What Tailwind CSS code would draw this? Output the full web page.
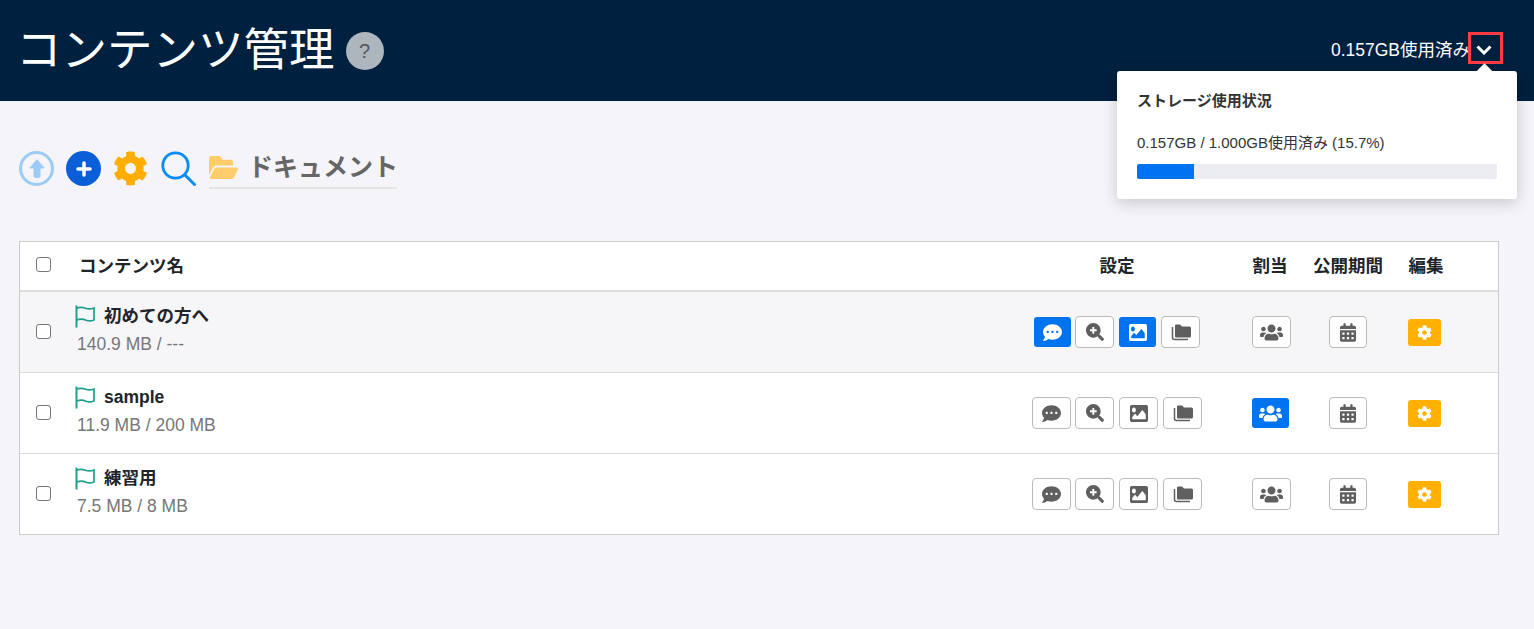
<!DOCTYPE html>
<html lang="ja">
<head>
  <meta charset="UTF-8">
  <title>コンテンツ管理</title>
  <script src="https://cdn.jsdelivr.net/npm/@tailwindcss/browser@4"></script>
</head>
<body class="bg-[#f4f4f9] text-[#212529] font-['Liberation_Sans','Noto_Sans_CJK_JP',sans-serif] h-[629px] overflow-hidden">
  <svg class="hidden">
    <defs>
      <symbol id="cog" viewBox="0 0 512 512"><path fill="currentColor" d="M487.4 315.7l-42.6-24.6c4.3-23.2 4.3-47 0-70.2l42.6-24.6c4.9-2.8 7.1-8.6 5.5-14-11.1-35.6-30-67.8-54.7-94.6-3.8-4.1-10-5.1-14.8-2.3L380.8 110c-17.9-15.4-38.5-27.3-60.8-35.1V25.8c0-5.6-3.9-10.5-9.4-11.7-36.7-8.2-74.3-7.8-109.2 0-5.5 1.2-9.4 6.1-9.4 11.7V75c-22.2 7.9-42.8 19.8-60.8 35.1L88.7 85.5c-4.9-2.8-11-1.9-14.8 2.3-24.7 26.7-43.6 58.9-54.7 94.6-1.7 5.4.6 11.2 5.5 14L67.3 221c-4.3 23.2-4.3 47 0 70.2l-42.6 24.6c-4.9 2.8-7.1 8.6-5.5 14 11.1 35.6 30 67.8 54.7 94.6 3.8 4.1 10 5.1 14.8 2.3l42.6-24.6c17.9 15.4 38.5 27.3 60.8 35.1v49.2c0 5.6 3.9 10.5 9.4 11.7 36.7 8.2 74.3 7.8 109.2 0 5.5-1.2 9.4-6.1 9.4-11.7v-49.2c22.2-7.9 42.8-19.8 60.8-35.1l42.6 24.6c4.9 2.8 11 1.9 14.8-2.3 24.7-26.7 43.6-58.9 54.7-94.6 1.5-5.5-.7-11.3-5.6-14.1zM256 336c-44.1 0-80-35.9-80-80s35.9-80 80-80 80 35.9 80 80-35.9 80-80 80z"/></symbol>
      <symbol id="chat" viewBox="0 0 512 512"><path fill="currentColor" d="M256 32C114.6 32 0 125.1 0 240c0 49.6 21.4 95 57 130.7C44.5 421.1 2.7 466 2.2 466.5c-2.2 2.3-2.8 5.7-1.5 8.7S4.8 480 8 480c66.3 0 116-31.8 140.6-51.4 32.7 12.3 69 19.4 107.4 19.4 141.4 0 256-93.1 256-208S397.4 32 256 32zM128 272c-17.7 0-32-14.3-32-32s14.3-32 32-32 32 14.3 32 32-14.3 32-32 32zm128 0c-17.7 0-32-14.3-32-32s14.3-32 32-32 32 14.3 32 32-14.3 32-32 32zm128 0c-17.7 0-32-14.3-32-32s14.3-32 32-32 32 14.3 32 32-14.3 32-32 32z"/></symbol>
      <symbol id="zoom" viewBox="0 0 512 512"><path fill="currentColor" fill-rule="evenodd" d="M304 192v32c0 6.6-5.4 12-12 12h-56v56c0 6.6-5.4 12-12 12h-32c-6.6 0-12-5.4-12-12v-56h-56c-6.6 0-12-5.4-12-12v-32c0-6.6 5.4-12 12-12h56v-56c0-6.6 5.4-12 12-12h32c6.6 0 12 5.4 12 12v56h56c6.6 0 12 5.4 12 12zm201 284.7L476.7 505c-9.4 9.4-24.6 9.4-33.9 0L343 405.3c-4.5-4.5-7-10.6-7-17V372c-35.3 27.6-79.7 44-128 44C93.1 416 0 322.9 0 208S93.1 0 208 0s208 93.1 208 208c0 48.3-16.4 92.7-44 128h16.3c6.4 0 12.5 2.5 17 7l99.7 99.7c9.3 9.4 9.3 24.6 0 34z"/></symbol>
      <symbol id="image" viewBox="0 64 512 384" preserveAspectRatio="none"><path fill="currentColor" d="M464 448H48c-26.51 0-48-21.49-48-48V112c0-26.51 21.49-48 48-48h416c26.51 0 48 21.49 48 48v288c0 26.51-21.49 48-48 48zM112 120c-30.928 0-56 25.072-56 56s25.072 56 56 56 56-25.072 56-56-25.072-56-56-56zM64 384h384V272l-87.515-87.515c-4.686-4.686-12.284-4.686-16.971 0L208 320l-55.515-55.515c-4.686-4.686-12.284-4.686-16.971 0L64 336v48z"/></symbol>
      <symbol id="folders" viewBox="0 0 20 17"><path fill="currentColor" d="M4 1.5a1 1 0 0 1 1-1h4l2 2h7.5a1.5 1.5 0 0 1 1.5 1.5v8a1.5 1.5 0 0 1-1.5 1.5H5a1 1 0 0 1-1-1z"/><path fill="none" stroke="currentColor" stroke-width="1.5" d="M1.5 3v10.5a2 2 0 0 0 2 2H17"/></symbol>
      <symbol id="users" viewBox="0 0 640 512"><path fill="currentColor" d="M96 224c35.3 0 64-28.7 64-64s-28.7-64-64-64-64 28.7-64 64 28.7 64 64 64zm448 0c35.3 0 64-28.7 64-64s-28.7-64-64-64-64 28.7-64 64 28.7 64 64 64zm32 32h-64c-17.6 0-33.5 7.1-45.1 18.6 40.3 22.1 68.9 62 75.1 109.4h66c17.7 0 32-14.3 32-32v-32c0-35.3-28.7-64-64-64zm-256 0c61.9 0 112-50.1 112-112S381.9 32 320 32 208 82.1 208 144s50.1 112 112 112zm76.8 32h-8.3c-20.8 10-43.9 16-68.5 16s-47.6-6-68.5-16h-8.3C179.6 288 128 339.6 128 403.2V432c0 26.5 21.5 48 48 48h288c26.5 0 48-21.5 48-48v-28.8c0-63.6-51.6-115.2-115.2-115.2zm-223.7-13.4C161.5 263.1 145.6 256 128 256H64c-35.3 0-64 28.7-64 64v32c0 17.7 14.3 32 32 32h65.9c6.3-47.4 34.9-87.3 75.2-109.4z"/></symbol>
      <symbol id="calendar" viewBox="0 0 448 512"><path fill="currentColor" d="M0 464c0 26.5 21.5 48 48 48h352c26.5 0 48-21.5 48-48V192H0v272zm320-196c0-6.6 5.4-12 12-12h40c6.6 0 12 5.4 12 12v40c0 6.6-5.4 12-12 12h-40c-6.6 0-12-5.4-12-12v-40zm0 128c0-6.6 5.4-12 12-12h40c6.6 0 12 5.4 12 12v40c0 6.6-5.4 12-12 12h-40c-6.6 0-12-5.4-12-12v-40zM192 268c0-6.6 5.4-12 12-12h40c6.6 0 12 5.4 12 12v40c0 6.6-5.4 12-12 12h-40c-6.6 0-12-5.4-12-12v-40zm0 128c0-6.6 5.4-12 12-12h40c6.6 0 12 5.4 12 12v40c0 6.6-5.4 12-12 12h-40c-6.6 0-12-5.4-12-12v-40zM64 268c0-6.6 5.4-12 12-12h40c6.6 0 12 5.4 12 12v40c0 6.6-5.4 12-12 12H76c-6.6 0-12-5.4-12-12v-40zm0 128c0-6.6 5.4-12 12-12h40c6.6 0 12 5.4 12 12v40c0 6.6-5.4 12-12 12H76c-6.6 0-12-5.4-12-12v-40zM400 64h-48V16c0-8.8-7.2-16-16-16h-32c-8.8 0-16 7.2-16 16v48H160V16c0-8.8-7.2-16-16-16h-32c-8.8 0-16 7.2-16 16v48H48C21.5 64 0 85.5 0 112v48h448v-48c0-26.5-21.5-48-48-48z"/></symbol>
      <symbol id="flag" viewBox="0 0 21 23"><path fill="none" stroke="currentColor" stroke-width="2" d="M1.5 .5v22"/><path fill="none" stroke="currentColor" stroke-width="1.7" d="M1.5 3C5 2 8 2.2 10.5 3.2S16 4.2 19 3V15c-3 1.2-6 1.2-8.5 0S5 13.8 1.5 15"/></symbol>
    </defs>
  </svg>

  <header class="relative h-[101px] bg-[#00203f] flex items-center justify-between pl-[16px] pr-[31px]">
    <div class="flex items-center gap-[11px]">
      <h1 class="text-[45.5px] leading-none font-normal text-white whitespace-nowrap">コンテンツ管理</h1>
      <span class="w-[38px] h-[38px] rounded-full bg-[#adb5bd] text-[#555] text-[20px] flex items-center justify-center">?</span>
    </div>
    <div class="flex items-start self-start mt-[32px]">
      <span class="text-white text-[17.5px] leading-[36px] whitespace-nowrap -mr-[2px]">0.157GB使用済み</span>
      <button class="w-[35px] h-[32px] border-[3px] border-[#ff3b45] text-white flex items-center justify-center">
        <svg class="w-[16px] h-[10px] mt-[3px] mr-[3px]" viewBox="0 0 16 10"><path fill="none" stroke="currentColor" stroke-width="3" d="M1.5 1.5L8 8l6.5-6.5"/></svg>
      </button>
    </div>

    <div class="absolute left-[1117px] top-[71px] w-[400px] h-[128px] bg-white rounded-[3px] shadow-[0_4px_16px_rgba(0,0,0,0.18)] px-[20px] pt-[21px] text-[#333] z-10">
      <span class="absolute -top-[5px] left-[361px] w-[13px] h-[13px] rotate-45 bg-white"></span>
      <h2 class="text-[15px] leading-[18px] font-bold">ストレージ使用状況</h2>
      <p class="mt-[23px] text-[15px] leading-[20px]">0.157GB / 1.000GB使用済み (15.7%)</p>
      <div class="mt-[11px] h-[15px] bg-[#ecedf2] rounded-[2px] overflow-hidden">
        <div class="h-full bg-[#0073f0]" style="width:15.7%"></div>
      </div>
    </div>
  </header>

  <main class="px-[19px]">
    <div class="flex items-start h-[36px] mt-[50px]">
      <span class="w-[35px] h-[35px] rounded-full border-[3px] border-[#9ccbf8] bg-[#f4f4f9] flex items-center justify-center">
        <svg class="w-[16px] h-[19px]" viewBox="0 0 16 19"><path fill="#9ccbf8" stroke="#9ccbf8" stroke-linejoin="round" d="M8 .8L15.2 9H11V17a1.5 1.5 0 0 1-1.5 1.5h-3A1.5 1.5 0 0 1 5 17V9H.8z"/></svg>
      </span>
      <span class="ml-[12px] w-[35px] h-[35px] rounded-full bg-[#0a5fd8] flex items-center justify-center">
        <svg class="w-[16px] h-[16px]" viewBox="0 0 16 16"><path fill="none" stroke="#fff" stroke-width="3.5" stroke-linecap="round" d="M8 2v12M2 8h12"/></svg>
      </span>
      <svg class="ml-[12px] w-[35px] h-[35px] text-[#ffae00]"><use href="#cog"/></svg>
      <svg class="ml-[13px] w-[35px] h-[35px] text-[#0a8cf5]" viewBox="0 0 35 35"><circle cx="14.5" cy="14.5" r="12.7" fill="none" stroke="currentColor" stroke-width="2.8"/><path d="M24 24l9.5 9.5" fill="none" stroke="currentColor" stroke-width="3" stroke-linecap="round"/></svg>
      <div class="ml-[13px] flex items-center h-[38px] pb-[3px] border-b-2 border-[#e4e4e7] w-[188px]">
        <svg class="w-[29px] h-[23px] shrink-0" viewBox="0 64 576 384" preserveAspectRatio="none"><path fill="#ffce6b" d="M572.694 292.093L500.27 416.248A63.997 63.997 0 0 1 444.989 448H45.025c-18.523 0-30.064-20.093-20.731-36.093l72.424-124.155A64 64 0 0 1 152 256h399.964c18.523 0 30.064 20.093 20.73 36.093zM152 224h328v-48c0-26.51-21.49-48-48-48H272l-64-64H48C21.49 64 0 85.49 0 112v278.046l69.077-118.418C86.214 242.25 117.989 224 152 224z"/></svg>
        <span class="ml-[10px] text-[25px] leading-none font-bold text-[#666] whitespace-nowrap">ドキュメント</span>
      </div>
    </div>

    <div class="mt-[54px] w-[1480px] border border-[#ccc] bg-white">
      <div class="grid grid-cols-[47px_933px_234px_72px_84px_72px_36px] h-[50px] items-center border-b-2 border-[#dcdcdc] text-[17.5px] font-bold text-[#212529]">
        <input type="checkbox" class="justify-self-center w-[15px] h-[15px] appearance-none rounded-[3px] border border-[#767676] bg-white -mt-[4px]">
        <span class="pl-[12px]">コンテンツ名</span>
        <span class="text-center">設定</span>
        <span class="text-center">割当</span>
        <span class="text-center">公開期間</span>
        <span class="text-center">編集</span>
      </div>

      <div class="grid grid-cols-[47px_933px_234px_72px_84px_72px_36px] h-[81px] items-center border-b border-[#dcdcdc] bg-[#f6f6f9]">
        <input type="checkbox" class="justify-self-center w-[15px] h-[15px] -mt-[2px] appearance-none rounded-[3px] border border-[#767676] bg-white">
        <div class="pl-[8px] pb-[5px]">
          <div class="flex items-center gap-[8px] h-[24px]">
            <svg class="w-[21px] h-[23px] text-[#1fa08a]"><use href="#flag"/></svg>
            <span class="text-[17.5px] font-bold">初めての方へ</span>
          </div>
          <p class="mt-[4px] pl-[2px] text-[17.5px] leading-[22px] text-[#777]">140.9 MB / ---</p>
        </div>
        <div class="flex justify-center gap-[4px]">
          <button class="w-[37px] h-[30px] rounded-[3px] bg-[#0073f0] text-white flex items-center justify-center"><svg class="w-[19px] h-[19px]"><use href="#chat"/></svg></button>
          <button class="w-[39px] h-[32px] -my-px mr-px rounded-[4px] border border-[#bbb] bg-white text-[#5f5f5f] flex items-center justify-center"><svg class="w-[18px] h-[18px]"><use href="#zoom"/></svg></button>
          <button class="w-[37px] h-[30px] mr-px rounded-[3px] bg-[#0073f0] text-white flex items-center justify-center"><svg class="w-[18px] h-[17px]"><use href="#image"/></svg></button>
          <button class="w-[39px] h-[32px] -my-px rounded-[4px] border border-[#bbb] bg-white text-[#5f5f5f] flex items-center justify-center"><svg class="w-[20px] h-[17px]"><use href="#folders"/></svg></button>
        </div>
        <div class="flex justify-center pl-[2px]"><button class="w-[39px] h-[32px] rounded-[4px] border border-[#bbb] bg-white text-[#5f5f5f] flex items-center justify-center"><svg class="w-[23px] h-[19px]"><use href="#users"/></svg></button></div>
        <div class="flex justify-center"><button class="w-[38px] h-[32px] rounded-[4px] border border-[#bbb] bg-white text-[#5f5f5f] flex items-center justify-center"><svg class="w-[16px] h-[19px]"><use href="#calendar"/></svg></button></div>
        <div class="flex justify-center pr-[3px]"><button class="w-[33px] h-[27px] rounded-[3px] bg-[#ffb000] text-white flex items-center justify-center"><svg class="w-[15px] h-[15px]"><use href="#cog"/></svg></button></div>
      </div>

      <div class="grid grid-cols-[47px_933px_234px_72px_84px_72px_36px] h-[81px] items-center border-b border-[#dcdcdc] bg-white">
        <input type="checkbox" class="justify-self-center w-[15px] h-[15px] -mt-[2px] appearance-none rounded-[3px] border border-[#767676] bg-white">
        <div class="pl-[8px] pb-[5px]">
          <div class="flex items-center gap-[8px] h-[24px]">
            <svg class="w-[21px] h-[23px] text-[#1fa08a]"><use href="#flag"/></svg>
            <span class="text-[17.5px] font-bold">sample</span>
          </div>
          <p class="mt-[4px] pl-[2px] text-[17.5px] leading-[22px] text-[#777]">11.9 MB / 200 MB</p>
        </div>
        <div class="flex justify-center gap-[4px]">
          <button class="w-[39px] h-[32px] rounded-[4px] border border-[#bbb] bg-white text-[#5f5f5f] flex items-center justify-center"><svg class="w-[19px] h-[19px]"><use href="#chat"/></svg></button>
          <button class="w-[39px] h-[32px] mr-px rounded-[4px] border border-[#bbb] bg-white text-[#5f5f5f] flex items-center justify-center"><svg class="w-[18px] h-[18px]"><use href="#zoom"/></svg></button>
          <button class="w-[39px] h-[32px] mr-px rounded-[4px] border border-[#bbb] bg-white text-[#5f5f5f] flex items-center justify-center"><svg class="w-[18px] h-[17px]"><use href="#image"/></svg></button>
          <button class="w-[39px] h-[32px] rounded-[4px] border border-[#bbb] bg-white text-[#5f5f5f] flex items-center justify-center"><svg class="w-[20px] h-[17px]"><use href="#folders"/></svg></button>
        </div>
        <div class="flex justify-center"><button class="w-[37px] h-[30px] rounded-[3px] bg-[#0073f0] text-white flex items-center justify-center"><svg class="w-[23px] h-[19px]"><use href="#users"/></svg></button></div>
        <div class="flex justify-center"><button class="w-[38px] h-[32px] rounded-[4px] border border-[#bbb] bg-white text-[#5f5f5f] flex items-center justify-center"><svg class="w-[16px] h-[19px]"><use href="#calendar"/></svg></button></div>
        <div class="flex justify-center pr-[3px]"><button class="w-[33px] h-[27px] rounded-[3px] bg-[#ffb000] text-white flex items-center justify-center"><svg class="w-[15px] h-[15px]"><use href="#cog"/></svg></button></div>
      </div>

      <div class="grid grid-cols-[47px_933px_234px_72px_84px_72px_36px] h-[80px] items-center bg-white">
        <input type="checkbox" class="justify-self-center w-[15px] h-[15px] -mt-[2px] appearance-none rounded-[3px] border border-[#767676] bg-white">
        <div class="pl-[8px] pb-[5px]">
          <div class="flex items-center gap-[8px] h-[24px]">
            <svg class="w-[21px] h-[23px] text-[#1fa08a]"><use href="#flag"/></svg>
            <span class="text-[17.5px] font-bold">練習用</span>
          </div>
          <p class="mt-[4px] pl-[2px] text-[17.5px] leading-[22px] text-[#777]">7.5 MB / 8 MB</p>
        </div>
        <div class="flex justify-center gap-[4px]">
          <button class="w-[39px] h-[32px] rounded-[4px] border border-[#bbb] bg-white text-[#5f5f5f] flex items-center justify-center"><svg class="w-[19px] h-[19px]"><use href="#chat"/></svg></button>
          <button class="w-[39px] h-[32px] mr-px rounded-[4px] border border-[#bbb] bg-white text-[#5f5f5f] flex items-center justify-center"><svg class="w-[18px] h-[18px]"><use href="#zoom"/></svg></button>
          <button class="w-[39px] h-[32px] mr-px rounded-[4px] border border-[#bbb] bg-white text-[#5f5f5f] flex items-center justify-center"><svg class="w-[18px] h-[17px]"><use href="#image"/></svg></button>
          <button class="w-[39px] h-[32px] rounded-[4px] border border-[#bbb] bg-white text-[#5f5f5f] flex items-center justify-center"><svg class="w-[20px] h-[17px]"><use href="#folders"/></svg></button>
        </div>
        <div class="flex justify-center pl-[2px]"><button class="w-[39px] h-[32px] rounded-[4px] border border-[#bbb] bg-white text-[#5f5f5f] flex items-center justify-center"><svg class="w-[23px] h-[19px]"><use href="#users"/></svg></button></div>
        <div class="flex justify-center"><button class="w-[38px] h-[32px] rounded-[4px] border border-[#bbb] bg-white text-[#5f5f5f] flex items-center justify-center"><svg class="w-[16px] h-[19px]"><use href="#calendar"/></svg></button></div>
        <div class="flex justify-center pr-[3px]"><button class="w-[33px] h-[27px] rounded-[3px] bg-[#ffb000] text-white flex items-center justify-center"><svg class="w-[15px] h-[15px]"><use href="#cog"/></svg></button></div>
      </div>
    </div>
  </main>
</body>
</html>
